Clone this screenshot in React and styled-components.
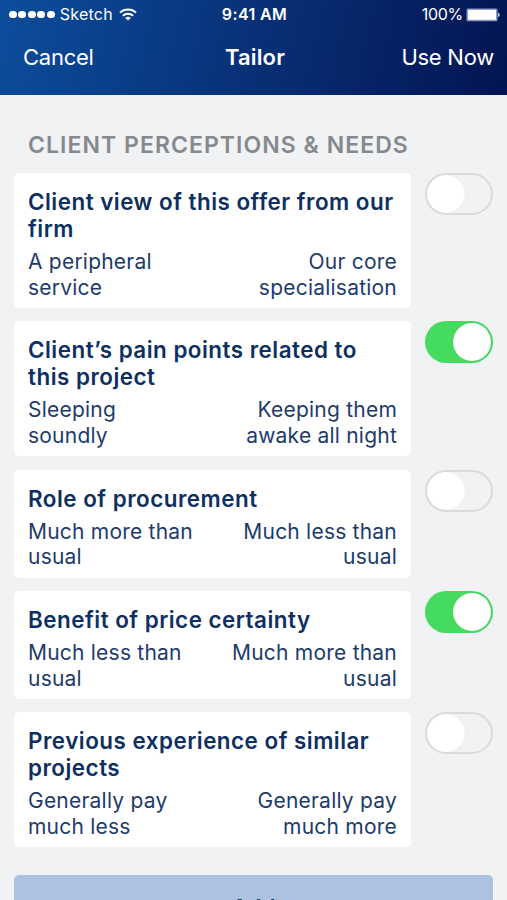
import React, { useState } from "react";
import styled, { createGlobalStyle, css } from "styled-components";

const questions = [
  {
    title: "Client view of this offer from our firm",
    low: ["A peripheral", "service"],
    high: ["Our core", "specialisation"],
    on: false,
  },
  {
    title: "Client’s pain points related to this project",
    low: ["Sleeping", "soundly"],
    high: ["Keeping them", "awake all night"],
    on: true,
  },
  {
    title: "Role of procurement",
    low: ["Much more than", "usual"],
    high: ["Much less than", "usual"],
    on: false,
  },
  {
    title: "Benefit of price certainty",
    low: ["Much less than", "usual"],
    high: ["Much more than", "usual"],
    on: true,
  },
  {
    title: "Previous experience of similar projects",
    low: ["Generally pay", "much less"],
    high: ["Generally pay", "much more"],
    on: false,
  },
];

const WifiIcon = () => (
  <svg width="18" height="13" viewBox="0 0 18 13" fill="none">
    <path d="M1 4.6C5.5 0.4 12.5 0.4 17 4.6" stroke="#fff" strokeWidth="2" />
    <path d="M3.8 7.8C6.8 5 11.2 5 14.2 7.8" stroke="#fff" strokeWidth="2" />
    <path d="M6.2 9.9C7.8 8.5 10.2 8.5 11.8 9.9L9 12.6Z" fill="#fff" />
  </svg>
);

const BatteryIcon = () => (
  <svg width="34" height="14" viewBox="0 0 34 14">
    <rect x="0.5" y="0.5" width="31" height="12.8" rx="1.5" fill="#8f9bc0" />
    <rect x="2" y="2" width="28" height="9.8" rx="0.8" fill="#fff" />
    <path d="M32.2 4.7C34 5.2 34 8.6 32.2 9.1Z" fill="#fff" />
  </svg>
);

const Question = ({ title, low, high, on }) => {
  const [checked, setChecked] = useState(on);

  return (
    <Row>
      <Card>
        <h3>{title}</h3>
        <Scale>
          <p>
            {low[0]}
            <br />
            {low[1]}
          </p>
          <p className="high">
            {high[0]}
            <br />
            {high[1]}
          </p>
        </Scale>
      </Card>
      <Toggle
        type="button"
        role="switch"
        aria-checked={checked}
        $on={checked}
        onClick={() => setChecked(!checked)}
      >
        <Knob />
      </Toggle>
    </Row>
  );
};

const App = () => {
  return (
    <>
      <GlobalStyle />
      <Screen>
        <Header>
          <StatusBar>
            <Carrier>
              <Signal>
                <i />
                <i />
                <i />
                <i />
                <i />
              </Signal>
              <span>Sketch</span>
              <WifiIcon />
            </Carrier>
            <Clock>9:41 AM</Clock>
            <Battery>
              <span>100%</span>
              <BatteryIcon />
            </Battery>
          </StatusBar>
          <NavBar>
            <NavButton>Cancel</NavButton>
            <NavTitle>Tailor</NavTitle>
            <NavButton $right>Use Now</NavButton>
          </NavBar>
        </Header>

        <Content>
          <SectionTitle>CLIENT PERCEPTIONS &amp; NEEDS</SectionTitle>
          <List>
            {questions.map((q) => (
              <Question key={q.title} {...q} />
            ))}
          </List>
          <AddButton>Add</AddButton>
        </Content>
      </Screen>
    </>
  );
};

export default App;

const GlobalStyle = createGlobalStyle`
  * {
    box-sizing: border-box;
  }
  body {
    margin: 0;
    overflow: hidden;
    background: #f0f2f4;
    font-family: Inter, "Liberation Sans", sans-serif;
  }
  button {
    font-family: inherit;
    border: none;
    padding: 0;
    cursor: pointer;
  }
`;

const Screen = styled.div`
  width: 507px;
  height: 900px;
  overflow: hidden;
  background: #f0f2f4;
`;

const Header = styled.header`
  height: 95px;
  color: #fff;
  background: linear-gradient(103deg, #0c4d9c 0%, #082f75 52%, #031452 100%);
`;

const StatusBar = styled.div`
  display: grid;
  grid-template-columns: 1fr auto 1fr;
  align-items: center;
  height: 28px;
  padding: 1px 7px 0 9px;
  font-size: 16px;
  line-height: 27px;
`;

const Carrier = styled.div`
  display: flex;
  align-items: center;
  span {
    margin: 0 6px 0 5px;
    letter-spacing: 0.25px;
  }
`;

const Signal = styled.div`
  display: flex;
  gap: 1.7px;
  i {
    width: 7.8px;
    height: 7.8px;
    border-radius: 50%;
    background: #fff;
  }
`;

const Clock = styled.div`
  font-weight: 600;
  font-size: 16px;
  letter-spacing: 0.4px;
`;

const Battery = styled.div`
  display: flex;
  align-items: center;
  justify-content: flex-end;
  gap: 3px;
  span {
    letter-spacing: -0.3px;
  }
`;

const NavBar = styled.nav`
  display: grid;
  grid-template-columns: 1fr auto 1fr;
  align-items: center;
  height: 58px;
  padding: 0 13px 0 16px;
`;

const NavButton = styled.button`
  justify-self: ${(props) => (props.$right ? "end" : "start")};
  margin-left: ${(props) => (props.$right ? 0 : "7px")};
  color: #fff;
  background: none;
  font-size: 22px;
  line-height: 28px;
  letter-spacing: -0.25px;
  white-space: nowrap;
`;

const NavTitle = styled.h1`
  margin: 0;
  font-size: 22px;
  font-weight: 600;
  line-height: 28px;
  letter-spacing: 0.15px;
`;

const Content = styled.main`
  padding: 35px 14px 0;
`;

const SectionTitle = styled.h2`
  margin: 0 0 13px;
  padding-left: 14px;
  color: #85898d;
  font-size: 23px;
  font-weight: 600;
  line-height: 30px;
  letter-spacing: 1.05px;
  white-space: nowrap;
`;

const List = styled.div`
  display: flex;
  flex-direction: column;
  gap: 13.35px;
`;

const Row = styled.section`
  display: flex;
  align-items: flex-start;
  justify-content: space-between;
`;

const Card = styled.div`
  width: 397px;
  padding: 15px 14px 8px;
  border-radius: 5px;
  background: #fff;
  h3 {
    margin: 0 0 7px;
    color: #0d2f61;
    font-size: 22.4px;
    font-weight: 600;
    line-height: 27px;
    letter-spacing: 0.5px;
  }
`;

const Scale = styled.div`
  display: flex;
  justify-content: space-between;
  color: #1d3b6b;
  p {
    margin: 0;
    font-size: 21px;
    line-height: 25.5px;
    letter-spacing: 0.22px;
    white-space: nowrap;
  }
  .high {
    text-align: right;
  }
`;

const Toggle = styled.button`
  display: flex;
  align-items: center;
  width: 68.5px;
  height: 42px;
  border-radius: 21px;
  ${(props) =>
    props.$on
      ? css`
          justify-content: flex-end;
          padding: 0 2px;
          background: #44db5e;
        `
      : css`
          justify-content: flex-start;
          padding: 0;
          border: 2px solid #dadbdc;
          background: #f0f2f4;
        `}
`;

const Knob = styled.span`
  width: 38px;
  height: 38px;
  border-radius: 50%;
  background: #fff;
  box-shadow: 0 0 1px rgba(0, 0, 0, 0.12);
`;

const AddButton = styled.button`
  display: block;
  width: 100%;
  height: 65px;
  margin-top: 27.4px;
  border-radius: 5px;
  color: #0d2f61;
  background: #adc1e1;
  font-size: 22.4px;
  font-weight: 600;
`;
